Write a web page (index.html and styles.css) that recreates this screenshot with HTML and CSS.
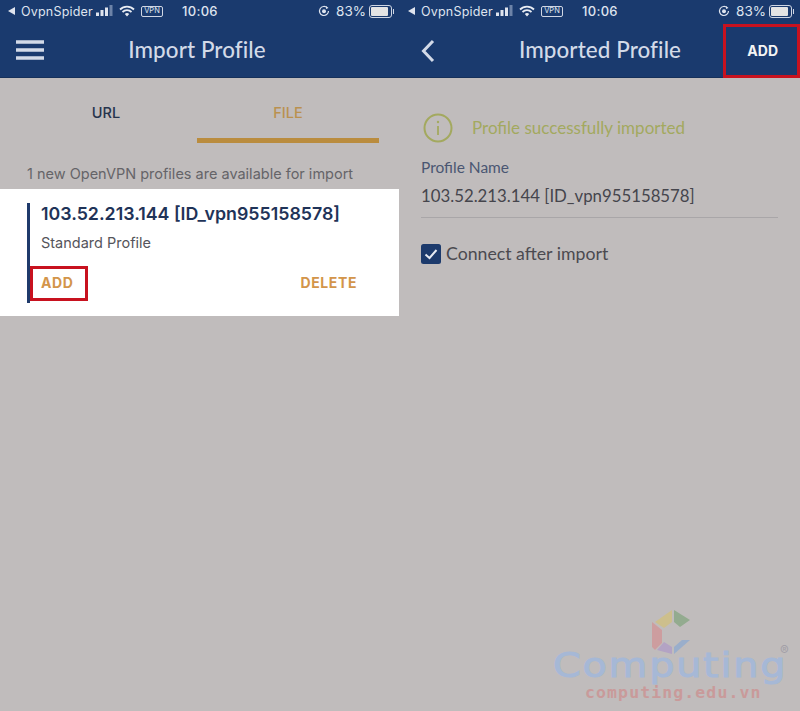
FILE: index.html
```html
<!DOCTYPE html>
<html lang="en">

<head>
	<meta charset="UTF-8">
	<title>Import Profile</title>
	<link rel="stylesheet" href="styles.css">
</head>

<body>
	<div class="page">
		<section class="phone">
			<header class="top">
				<div class="status">
					<span class="back-arrow"></span>
					<span class="carrier">OvpnSpider</span>
					<svg class="signal" width="18" height="12" viewBox="0 0 18 12">
						<rect x="0" y="7.5" width="3" height="3.5" fill="#dfe4ee" />
						<rect x="4.500" y="5" width="3" height="6" fill="#dfe4ee" />
						<rect x="9" y="2.500" width="3" height="8.500" fill="#dfe4ee" />
						<rect x="13.500" y="0" width="3" height="11" fill="#6d83a8" />
					</svg>
					<svg class="wifi" width="16" height="12" viewBox="0 0 16 12">
						<path d="M1 4.500a10 10 0 0 1 14 0M3.500 7a6.500 6.500 0 0 1 9 0" fill="none" stroke="#e8ecf3" stroke-width="1.800" />
						<path d="M5.800 9a3.200 3.200 0 0 1 4.400 0L8 11.500z" fill="#e8ecf3" />
					</svg>
					<span class="vpn">VPN</span>
					<span class="time">10:06</span>
					<span class="status-right">
						<svg width="12" height="12" viewBox="0 0 12 12">
							<path d="M10.500 6a4.500 4.500 0 1 1-1.300-3.200" fill="none" stroke="#dfe4ee" stroke-width="1.200" />
							<circle cx="6" cy="6.200" r="2" fill="#dfe4ee" />
							<path d="M8 1l2.500 2-2.500 1z" fill="#dfe4ee" />
						</svg>
						<span class="percent">83%</span>
						<span class="battery"><span class="battery-level"></span></span>
					</span>
				</div>
				<div class="nav nav-left">
					<svg class="nav-icon" width="28" height="20" viewBox="0 0 28 20">
						<path d="M0 2h28M0 10h28M0 18h28" stroke="#d3dae8" stroke-width="3.500" />
					</svg>
					<h1 class="nav-title">Import Profile</h1>
				</div>
			</header>

			<div class="tabs">
				<div class="tab">URL</div>
				<div class="tab tab-active">FILE</div>
			</div>
			<p class="hint">1 new OpenVPN profiles are available for import</p>

			<div class="card">
				<div class="card-body">
					<div class="card-title">103.52.213.144 [ID_vpn955158578]</div>
					<div class="card-sub">Standard Profile</div>
					<div class="card-actions">
						<span class="action">ADD</span>
						<span class="action">DELETE</span>
					</div>
					<span class="mark mark-add"></span>
				</div>
			</div>
		</section>

		<section class="phone">
			<header class="top">
				<div class="status">
					<span class="back-arrow"></span>
					<span class="carrier">OvpnSpider</span>
					<svg class="signal" width="18" height="12" viewBox="0 0 18 12">
						<rect x="0" y="7.5" width="3" height="3.5" fill="#dfe4ee" />
						<rect x="4.500" y="5" width="3" height="6" fill="#dfe4ee" />
						<rect x="9" y="2.500" width="3" height="8.500" fill="#dfe4ee" />
						<rect x="13.500" y="0" width="3" height="11" fill="#6d83a8" />
					</svg>
					<svg class="wifi" width="16" height="12" viewBox="0 0 16 12">
						<path d="M1 4.500a10 10 0 0 1 14 0M3.500 7a6.500 6.500 0 0 1 9 0" fill="none" stroke="#e8ecf3" stroke-width="1.800" />
						<path d="M5.800 9a3.200 3.200 0 0 1 4.400 0L8 11.500z" fill="#e8ecf3" />
					</svg>
					<span class="vpn">VPN</span>
					<span class="time">10:06</span>
					<span class="status-right">
						<svg width="12" height="12" viewBox="0 0 12 12">
							<path d="M10.500 6a4.500 4.500 0 1 1-1.300-3.200" fill="none" stroke="#dfe4ee" stroke-width="1.200" />
							<circle cx="6" cy="6.200" r="2" fill="#dfe4ee" />
							<path d="M8 1l2.500 2-2.500 1z" fill="#dfe4ee" />
						</svg>
						<span class="percent">83%</span>
						<span class="battery"><span class="battery-level"></span></span>
					</span>
				</div>
				<div class="nav">
					<svg class="nav-icon nav-back" width="14" height="24" viewBox="0 0 14 24">
						<path d="M12 2L2.500 12 12 22" fill="none" stroke="#d3dae8" stroke-width="3" />
					</svg>
					<h1 class="nav-title">Imported Profile</h1>
					<span class="nav-add">ADD</span>
				</div>
				<span class="mark mark-top"></span>
			</header>

			<div class="form">
				<div class="notice">
					<svg width="30" height="30" viewBox="0 0 30 30">
						<circle cx="15" cy="15" r="13.500" fill="none" stroke="#a3a95f" stroke-width="2" />
						<path d="M15 13v9" stroke="#a3a95f" stroke-width="1.800" />
						<circle cx="15" cy="9" r="1.200" fill="#a3a95f" />
					</svg>
					<span>Profile successfully imported</span>
				</div>
				<label class="field-label">Profile Name</label>
				<div class="field-value">103.52.213.144 [ID_vpn955158578]</div>
				<div class="check-row">
					<svg width="20" height="20" viewBox="0 0 20 20">
						<rect width="20" height="20" rx="2.500" fill="#1c3a6c" />
						<path d="M4.500 10.500l4 3.500 7-8" fill="none" stroke="#e6eaf2" stroke-width="2" />
					</svg>
					<span>Connect after import</span>
				</div>
			</div>
		</section>

		<div class="watermark">
			<svg class="wm-logo" width="39" height="45" viewBox="0 0 39 45">
				<path d="M3 12L20 0v12l-8 6z" fill="#cdbf8c" />
				<path d="M22 0l16 10-10 7-6-5z" fill="#93ab8f" />
				<path d="M0 12l10 8v13l-7 7-3-3z" fill="#cd9d9f" />
				<path d="M5 40l7-8 8 5v7z" fill="#b3a3c4" />
				<path d="M22 37l8-7h8L22 44z" fill="#9aaecb" />
			</svg>
			<div class="wm-name">Computing</div>
			<span class="wm-reg">®</span>
			<div class="wm-url">computing.edu.vn</div>
		</div>
	</div>
</body>

</html>
```

FILE: styles.css
```css
html,
body {
	margin: 0;
	padding: 0;
}

body {
	font-family: Inter, "Liberation Sans", sans-serif;
	background: #c0bcbc;
	color: #333;
}

.page {
	position: relative;
	display: grid;
	grid-template-columns: 400px 400px;
	width: 800px;
	height: 711px;
	overflow: hidden;
}

.phone {
	display: flex;
	flex-direction: column;
}

.top {
	position: relative;
	height: 78px;
	background: #1a3a6e;
	border-bottom: 1px solid #16305a;
	box-sizing: border-box;
}

.status {
	display: flex;
	align-items: center;
	height: 22px;
	padding: 0 8px;
	font-size: 12.5px;
	color: #dfe4ee;
}

.back-arrow {
	width: 0;
	height: 0;
	border-top: 4px solid transparent;
	border-bottom: 4px solid transparent;
	border-right: 7px solid #dfe4ee;
	margin-right: 6px;
}

.carrier {
	width: 70px;
	letter-spacing: 0.2px;
}

.signal {
	margin-left: 5px;
}

.wifi {
	margin-left: 5px;
}

.vpn {
	margin-left: 6px;
	width: 20px;
	height: 9px;
	line-height: 8px;
	border: 1px solid #cfd6e4;
	border-radius: 2px;
	font-size: 7.5px;
	text-align: center;
}

.time {
	margin-left: 19px;
	font-size: 13px;
	font-weight: 500;
	letter-spacing: 0.3px;
}

.status-right {
	display: flex;
	align-items: center;
	margin-left: auto;
	gap: 6px;
}

.percent {
	font-size: 13.5px;
	margin-right: -3px;
}

.battery {
	position: relative;
	display: block;
	width: 19px;
	height: 9px;
	padding: 1px;
	border: 1px solid #cfd6e4;
	border-radius: 3px;
}

.battery::after {
	content: "";
	position: absolute;
	right: -3px;
	top: 3px;
	width: 1px;
	height: 5px;
	background: #cfd6e4;
}

.battery-level {
	display: block;
	width: 17px;
	height: 9px;
	background: #e4e4e4;
	border-radius: 1px;
}

.nav {
	position: relative;
	display: flex;
	align-items: center;
	justify-content: center;
	height: 56px;
}

.nav-left {
	padding-right: 6px;
}

.nav-icon {
	position: absolute;
	left: 16px;
	top: 18px;
}

.nav-back {
	left: 21px;
	top: 17px;
}

.nav-title {
	margin: 0;
	font-family: Lato, "Open Sans", sans-serif;
	font-size: 22.400px;
	font-weight: 500;
	color: #d3dae8;
	letter-spacing: 0.1px;
	position: relative;
	top: -1px;
}

.nav-add {
	position: absolute;
	right: 22px;
	top: 20px;
	font-size: 14px;
	font-weight: 700;
	color: #f4f4f4;
}

.mark {
	position: absolute;
	box-sizing: border-box;
	border: 3px solid #c8121f;
}

.mark-top {
	right: 0;
	top: 24px;
	width: 77px;
	height: 54px;
}

.mark-add {
	left: 0;
	top: 63px;
	width: 58px;
	height: 35px;
}

.tabs {
	display: grid;
	grid-template-columns: 182px 182px;
	padding: 0 15px;
}

.tab {
	height: 65px;
	box-sizing: border-box;
	padding-top: 26px;
	text-align: center;
	font-size: 14.500px;
	font-weight: 500;
	color: #27344d;
}

.tab-active {
	color: #ba914f;
	border-bottom: 5px solid #ba8c3e;
}

.hint {
	margin: 21px 0 0;
	padding-left: 27px;
	height: 25px;
	font-size: 14.500px;
	line-height: 20px;
	color: #656468;
}

.card {
	width: 399px;
	height: 127px;
	box-sizing: border-box;
	padding: 14px 0 13px 27px;
	background: #fff;
}

.card-body {
	position: relative;
	height: 100px;
	box-sizing: border-box;
	padding-left: 11px;
	border-left: 3px solid #1f3a6b;
}

.card-title {
	font-size: 17.800px;
	font-weight: 600;
	line-height: 22px;
	color: #1f3358;
}

.card-sub {
	margin-top: 8px;
	font-size: 14.500px;
	line-height: 20px;
	color: #55555b;
}

.card-actions {
	display: flex;
	justify-content: space-between;
	margin-top: 20px;
	padding-right: 42px;
}

.action {
	font-size: 14px;
	font-weight: 700;
	line-height: 20px;
	letter-spacing: 0.6px;
	color: #d3954a;
}

.form {
	padding: 35px 22px 0 21px;
}

.notice {
	display: flex;
	align-items: center;
	gap: 19px;
	padding-left: 2px;
	font-family: Lato, "Open Sans", sans-serif;
	font-size: 17px;
	line-height: 30px;
	color: #a3a95f;
}

.field-label {
	display: block;
	margin-top: 14px;
	font-family: Lato, "Open Sans", sans-serif;
	font-size: 15.500px;
	line-height: 20px;
	color: #4a5672;
}

.field-value {
	margin-top: 8px;
	padding-bottom: 11px;
	border-bottom: 1px solid #a9a6a8;
	font-family: Lato, "Open Sans", sans-serif;
	font-size: 16.800px;
	line-height: 21px;
	color: #45454c;
}

.check-row {
	display: flex;
	align-items: center;
	gap: 5px;
	margin-top: 25px;
	font-family: Lato, "Open Sans", sans-serif;
	font-size: 17.700px;
	color: #4b4a50;
}

.watermark {
	position: absolute;
	left: 553px;
	top: 608px;
	width: 240px;
	height: 96px;
}

.wm-logo {
	position: absolute;
	left: 99px;
	top: 2px;
}

.wm-name {
	position: absolute;
	left: 0;
	top: 48px;
	font-family: "DejaVu Sans", sans-serif;
	font-size: 34px;
	line-height: 19px;
	letter-spacing: 1.500px;
	color: #a6b8d6;
	-webkit-text-stroke: 1px #a6b8d6;
	transform: scaleX(1.170);
	transform-origin: left center;
	white-space: nowrap;
}

.wm-reg {
	position: absolute;
	left: 227px;
	top: 36px;
	font-size: 13px;
	line-height: 12px;
	color: #a3a0a8;
}

.wm-url {
	position: absolute;
	left: 32px;
	top: 77px;
	font-family: "DejaVu Sans Mono", monospace;
	font-size: 16.500px;
	font-weight: 700;
	line-height: 16px;
	letter-spacing: 1.100px;
	color: #c99a9a;
	white-space: nowrap;
}
```
